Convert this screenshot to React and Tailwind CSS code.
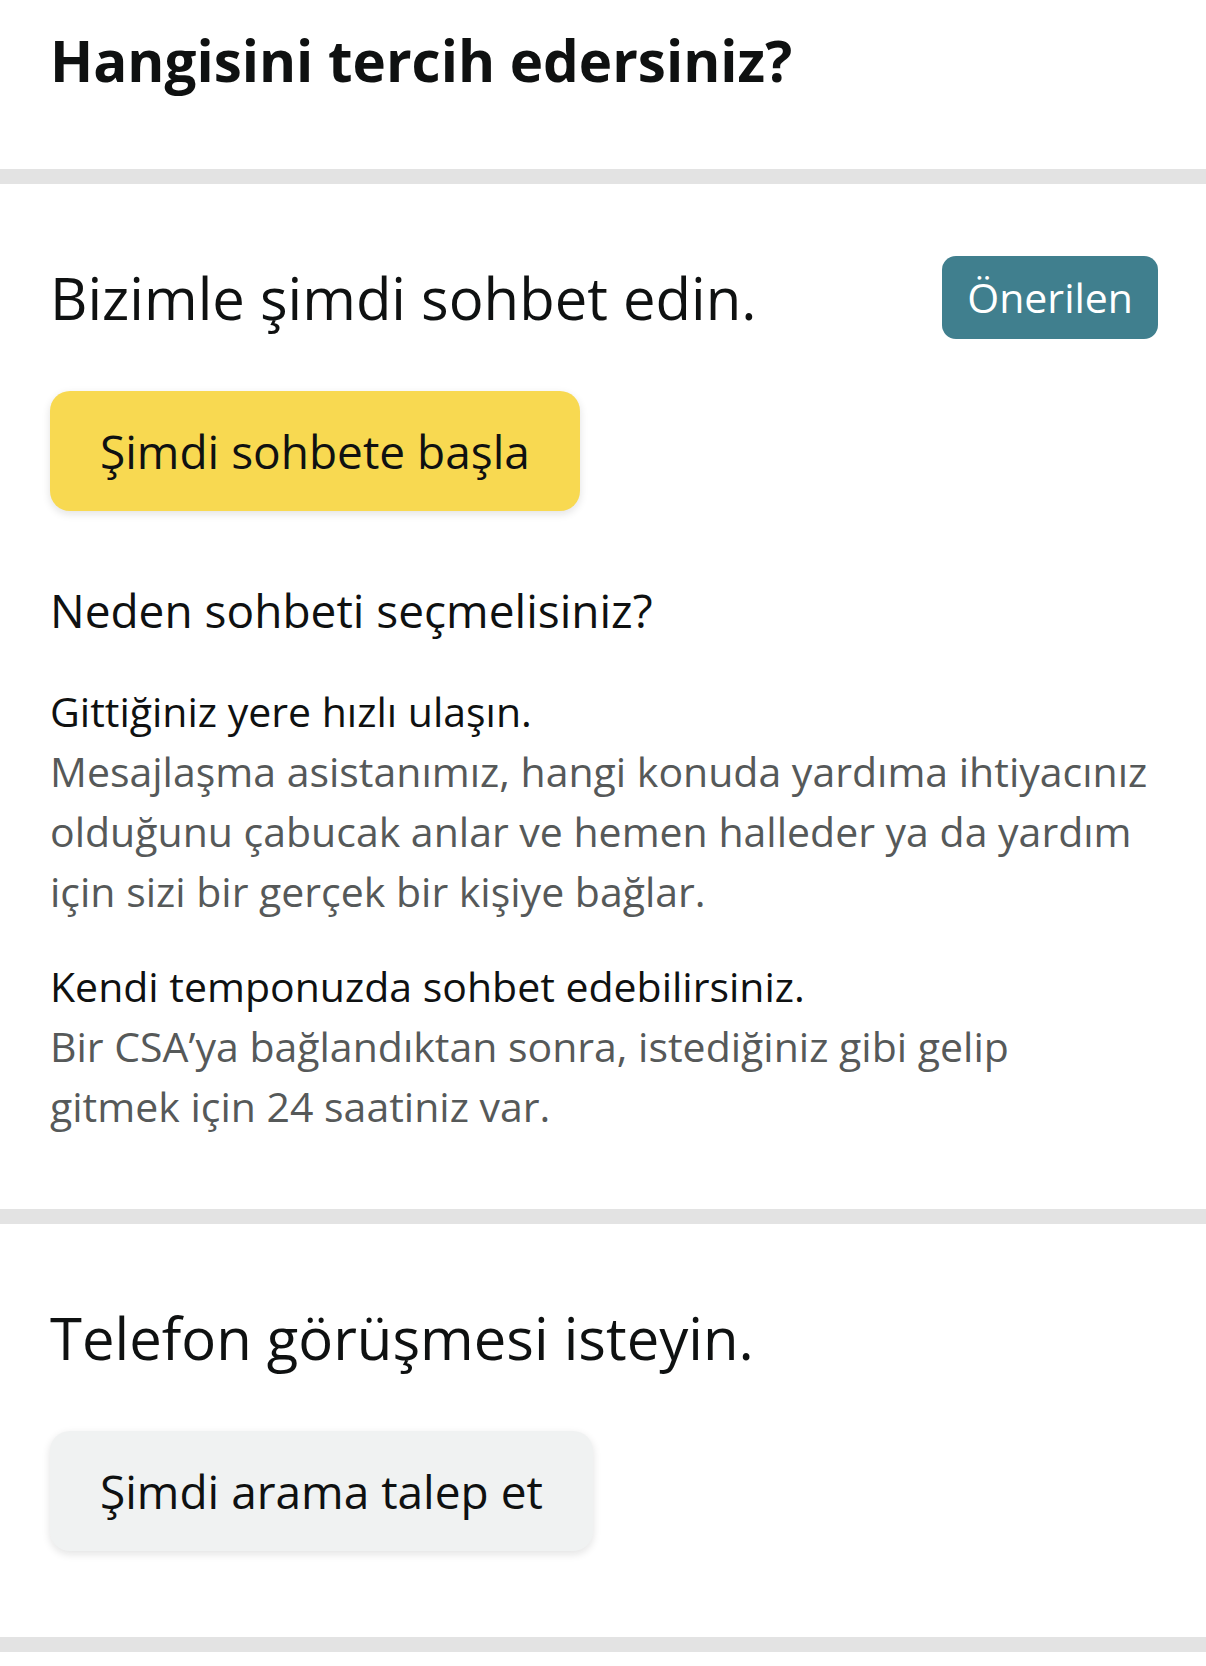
import React from 'react';

const Divider = () => <div className="h-[15px] bg-[#e3e3e3]" />;

const reasons = [
  {
    title: 'Gittiğiniz yere hızlı ulaşın.',
    lines: [
      'Mesajlaşma asistanımız, hangi konuda yardıma ihtiyacınız',
      'olduğunu çabucak anlar ve hemen halleder ya da yardım',
      'için sizi bir gerçek bir kişiye bağlar.',
    ],
  },
  {
    title: 'Kendi temponuzda sohbet edebilirsiniz.',
    lines: [
      'Bir CSA’ya bağlandıktan sonra, istediğiniz gibi gelip',
      'gitmek için 24 saatiniz var.',
    ],
  },
];

export default function App() {
  return (
    <div className="min-h-[1666px] bg-white font-['Open_Sans',sans-serif] text-[#0f1111]">
      {/* Page title */}
      <section className="h-[169px] px-[50px] pt-[28px]">
        <h1 className="text-[56.5px] font-bold leading-[66px] whitespace-nowrap">Hangisini tercih edersiniz?</h1>
      </section>

      <Divider />

      {/* Chat option */}
      <section className="pl-[50px] pr-[48px] pt-[72px] pb-[73px]">
        <div className="flex items-center justify-between">
          <h2 className="text-[58px] leading-[68px] whitespace-nowrap">Bizimle şimdi sohbet edin.</h2>
          <span className="flex h-[83px] items-center rounded-[14px] bg-[#407f8e] px-[25px] text-[41px] text-white">
            Önerilen
          </span>
        </div>

        <button className="mt-[52px] flex h-[120px] items-center rounded-[20px] bg-[#f8d951] px-[50px] text-[46px] shadow-[0_3px_8px_rgba(15,17,17,0.12)]">
          Şimdi sohbete başla
        </button>

        <h3 className="mt-[71px] text-[46px] leading-[56px]">Neden sohbeti seçmelisiniz?</h3>

        <div className="mt-[43px] flex flex-col gap-[35px]">
          {reasons.map((r) => (
            <div key={r.title} className="text-[41px] leading-[60px] whitespace-nowrap">
              <p>{r.title}</p>
              <p className="text-[#565959]">
                {r.lines.map((l, i) => (
                  <React.Fragment key={i}>
                    {i > 0 && <br />}
                    {l}
                  </React.Fragment>
                ))}
              </p>
            </div>
          ))}
        </div>
      </section>

      <Divider />

      {/* Phone option */}
      <section className="px-[50px] pt-[80px] pb-[86px]">
        <h2 className="text-[58px] leading-[68px] whitespace-nowrap">Telefon görüşmesi isteyin.</h2>
        <button className="mt-[59px] flex h-[120px] items-center rounded-[20px] bg-[#f0f2f2] px-[50px] text-[46px] shadow-[0_3px_8px_rgba(15,17,17,0.12)]">
          Şimdi arama talep et
        </button>
      </section>

      <Divider />
    </div>
  );
}
